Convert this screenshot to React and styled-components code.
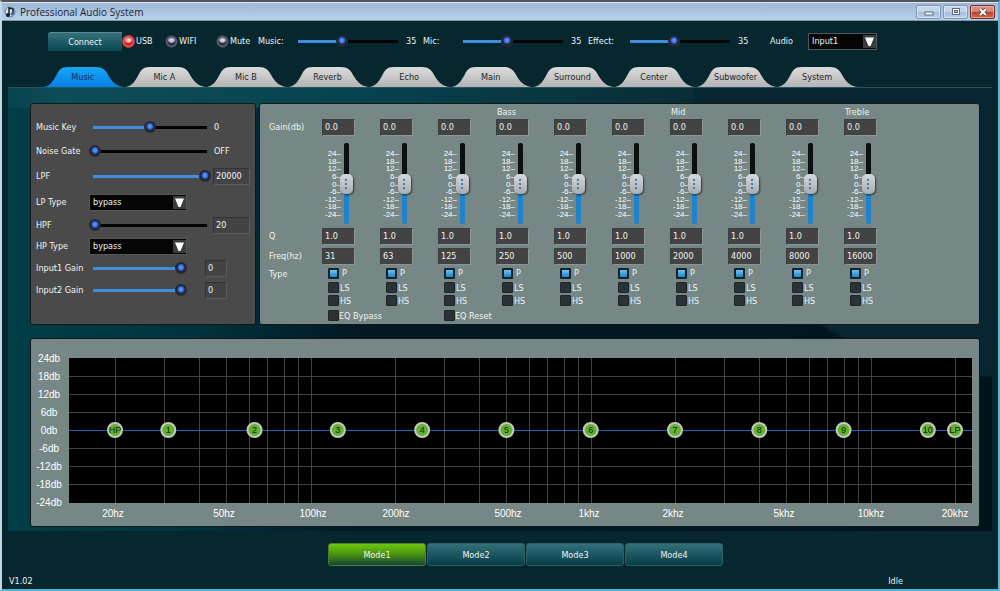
import React, { useState } from 'react';
import styled, { createGlobalStyle, css } from 'styled-components';

const ui = '"DejaVu Sans Condensed", "DejaVu Sans", sans-serif';
const plain = '"Liberation Sans", Arial, sans-serif';

const GlobalStyle = createGlobalStyle`
  * {
    box-sizing: border-box;
  }
  body {
    margin: 0;
    background: #07272f;
    color: #eef3f3;
    font: 9px/12px ${ui};
  }
  button, input, select {
    margin: 0;
    font: inherit;
    color: inherit;
  }
  fieldset {
    margin: 0;
    padding: 0;
    border: 0;
    min-width: 0;
  }
`;

const Window = styled.div`
  display: flex;
  flex-direction: column;
  min-height: 100vh;
  border: 2px solid;
  border-color: #505358 #5fb4d0 #4cb8d8 #c3d6e2;
  background: #07272f;
`;

const TitleBar = styled.header`
  display: flex;
  align-items: center;
  height: 19px;
  padding: 0 3px 0 2px;
  background: linear-gradient(#9db7d6, #b9d0ec);
  border-top: 1px solid #dce8f4;
  border-bottom: 1px solid #7c97a9;
  color: #1c2530;
`;

const Title = styled.h1`
  flex: 1;
  margin: 0 0 0 4px;
  font: 10px/16px "Open Sans", "Noto Sans", sans-serif;
`;

const WindowButton = styled.button`
  display: grid;
  place-items: center;
  width: 25px;
  height: 14px;
  margin-left: 2px;
  padding: 0;
  border: 1px solid ${p => (p.$close ? '#6e2b2b' : '#7f96b4')};
  border-radius: 2px;
  background: ${p => (p.$close
    ? 'linear-gradient(#d98a7c 45%, #bd3f2a 50%, #d0694f)'
    : 'linear-gradient(#c3d5ea 45%, #a6bedb 50%, #b9cfe8)')};
  box-shadow: inset 0 0 0 1px rgba(255, 255, 255, 0.4);
`;

const TopBar = styled.div`
  display: flex;
  align-items: center;
  height: 40px;
  padding-left: 46px;
`;

const ConnectButton = styled.button`
  width: 74px;
  height: 19px;
  border: 0;
  border-top: 1px solid #5a8c94;
  border-radius: 3px 0 0 0;
  background: linear-gradient(#35717a, #0b4750);
`;

const Radio = styled.label`
  display: flex;
  align-items: center;
  width: ${p => p.$width}px;
  gap: 1px;
  input {
    appearance: none;
    width: 13px;
    height: 13px;
    border-radius: 50%;
    background:
      radial-gradient(ellipse 4px 3px at 50% 40%, #dcdde8 0 25%, #8f90a8 80%, transparent),
      radial-gradient(circle, #2a2c3a 3px, #5d6070 5px, #0b1118 7px);
  }
  input:checked {
    background:
      radial-gradient(ellipse 4px 3px at 50% 40%, #ffdcdc 0 25%, #ff7a7a 80%, transparent),
      radial-gradient(circle, #c81e28 3px, #e0525a 5px, #8e2a30 7px);
  }
`;

const TopLabel = styled.label`
  width: ${p => p.$width}px;
`;

const TopValue = styled.output`
  width: ${p => p.$width}px;
  margin-left: 4px;
`;

const blueTrack = css`
  height: 3px;
  border-radius: 2px;
  background: linear-gradient(90deg, #3f8ddc ${p => p.$fill}%, #020405 ${p => p.$fill}%) center / calc(100% - 8px) 100% no-repeat;
`;

const Slider = styled.input`
  appearance: none;
  flex: none;
  width: ${p => p.$width}px;
  height: 12px;
  background: transparent;
  &::-webkit-slider-runnable-track {
    ${blueTrack}
  }
  &::-webkit-slider-thumb {
    appearance: none;
    width: 12px;
    height: 12px;
    margin-top: -5px;
    border-radius: 50%;
    background: radial-gradient(circle at 50% 45%, #5b95f2 0 1px, #2559c4 3px, #222433 4px, #2b2935 6px);
  }
`;

const SelectBox = styled.span`
  display: inline-grid;
  align-items: center;
  width: ${p => p.$width}px;
  height: 17px;
  border: 1px solid #50585a;
  background: #050505;
  > * {
    grid-area: 1 / 1;
  }
  select {
    appearance: none;
    width: 100%;
    height: 15px;
    padding: 0 0 0 3px;
    border: 0;
    background: transparent;
    line-height: 15px;
  }
  svg {
    justify-self: end;
    pointer-events: none;
  }
`;

const Tabs = styled.nav`
  display: flex;
  max-width: 816px;
  margin: 6px 0 0 40px;
`;

const Tab = styled.button`
  display: grid;
  flex: 1;
  height: 20px;
  padding: 0;
  border: 0;
  background: none;
  color: ${p => (p.$active ? '#0b2f63' : '#272727')};
  line-height: 20px;
  text-align: center;
  > * {
    grid-area: 1 / 1;
  }
  svg {
    width: 100%;
    height: 20px;
  }
`;

const Main = styled.main`
  display: flex;
  flex-direction: column;
  gap: 13px;
  margin: 0 6px;
  padding: 15px 12px 4px 22px;
  border-top: 1px solid #24545c;
  background:
    radial-gradient(ellipse 300px 290px at 100% 0, #07262f 99%, transparent),
    linear-gradient(90deg, #06444f, #0d4d58 5%, #06434f 35%, #0a2c34 70%) 0 0 / 100% 20px no-repeat,
    linear-gradient(90deg, #003f48, #00323c 20%, #021a24 35%, #01141c);
`;

const Row = styled.div`
  display: flex;
  gap: 3px;
`;

const SidePanel = styled.section`
  flex: 0 0 226px;
  padding: 11px 4px 0 5px;
  border: 1px solid #10181a;
  border-radius: 3px;
  background: #4a4a4a;
`;

const Setting = styled.div`
  display: flex;
  align-items: center;
  height: ${p => p.$height}px;
  > label {
    flex: 0 0 53px;
    white-space: nowrap;
  }
`;

const Box = styled.input`
  width: ${p => p.$width}px;
  height: 17px;
  margin-left: ${p => p.$gap || 0}px;
  padding: 0 0 1px 2px;
  border: 1px solid;
  border-color: #333 #5c5c5c #5c5c5c #333;
  background: #434343;
  line-height: 14px;
`;

const Reading = styled.output`
  margin-left: 3px;
`;

const EqPanel = styled.section`
  flex: 1;
  min-width: 0;
  height: 222px;
  padding: 2px 9px 0;
  border: 1px solid #10181a;
  border-radius: 3px;
  background: #768785;
`;

const Bands = styled.div`
  display: grid;
  grid-template-columns: 53px repeat(10, minmax(0, 58px));
`;

const Names = styled.div`
  display: flex;
  flex-direction: column;
  padding-top: 11px;
  line-height: 20px;
  span:nth-child(2) {
    margin-top: 89px;
  }
  span:nth-child(4) {
    line-height: 16px;
  }
`;

const Band = styled.fieldset`
  display: flex;
  flex-direction: column;
`;

const Region = styled.div`
  height: 13px;
  padding-left: 1px;
`;

const EqInput = styled(Box)`
  flex: none;
  width: 33px;
  margin: 0 0 ${p => p.$below || 0}px;
  border-color: #3a4040 #8a9795 #8a9795 #3a4040;
`;

const FaderRow = styled.div`
  display: flex;
  height: 81px;
  margin: 7px 0 4px;
`;

const Scale = styled.div`
  display: flex;
  flex-direction: column;
  justify-content: space-between;
  width: 19px;
  height: 68px;
  margin-top: 7px;
  color: #fff;
  font: 8px/7px ${plain};
  text-align: right;
`;

const Fader = styled.input`
  appearance: none;
  writing-mode: vertical-lr;
  direction: rtl;
  width: 14px;
  height: 81px;
  margin-left: -2px;
  background: transparent;
  &::-webkit-slider-runnable-track {
    width: 5px;
    border-radius: 2px;
    background: linear-gradient(#0c0f12 50%, #1d83cb 50%);
  }
  &::-webkit-slider-thumb {
    appearance: none;
    width: 13px;
    height: 20px;
    margin-left: -4px;
    border-radius: 5px;
    background:
      radial-gradient(circle, #3b83c0 1px, transparent 1px) 50% 50% / 4px 4px no-repeat,
      radial-gradient(circle, #3b83c0 1px, transparent 1px) 50% 25% / 4px 4px no-repeat,
      radial-gradient(circle, #3b83c0 1px, transparent 1px) 50% 75% / 4px 4px no-repeat,
      linear-gradient(#d8d9dc, #a9abb0);
    box-shadow: 1px 1px 2px rgba(0, 0, 0, 0.6);
  }
`;

const Tick = styled.label`
  display: flex;
  align-items: center;
  height: ${p => p.$height || 13}px;
  padding-left: 6px;
  gap: ${p => p.$gap || 0}px;
  white-space: nowrap;
  input {
    appearance: none;
    width: 11px;
    height: 11px;
    border: 1px solid #1e2629;
    border-radius: 1px;
    background: #2b3235;
  }
  input:checked {
    border: 2px solid #14222b;
    background: linear-gradient(#6cc4f0, #1c86c8);
  }
`;

const Switches = styled.div`
  display: grid;
  grid-template-columns: 116px 116px;
  padding: 2px 0 0 53px;
`;

const GraphPanel = styled.section`
  padding: 19px 7px 5px 5px;
  border: 1px solid #10181a;
  border-radius: 3px;
  background: #768785;
`;

const Graph = styled.svg`
  display: block;
  width: 100%;
  overflow: visible;
  text {
    font: 10px ${plain};
    fill: #fff;
    text-anchor: middle;
  }
  .node {
    font-size: 9px;
    fill: #0b2607;
  }
`;

const Modes = styled.div`
  display: flex;
  justify-content: center;
  gap: 1px;
  margin: 12px 0 0 51px;
`;

const ModeButton = styled.button`
  width: 98px;
  height: 23px;
  border: 1px solid ${p => (p.$active ? '#4b7f34' : '#2f5e66')};
  border-radius: 3px;
  background: ${p => (p.$active
    ? 'linear-gradient(#6cc60e, #48920f 50%, #17413a)'
    : 'linear-gradient(#33707a, #1c5761 50%, #063d48)')};
`;

const Footer = styled.footer`
  display: flex;
  justify-content: space-between;
  margin-top: auto;
  padding: 0 95px 2px 7px;
`;

const tabs = ['Music', 'Mic A', 'Mic B', 'Reverb', 'Echo', 'Main', 'Surround', 'Center', 'Subwoofer', 'System'];
const freqs = [31, 63, 125, 250, 500, 1000, 2000, 4000, 8000, 16000];
const regions = { 3: 'Bass', 6: 'Mid', 9: 'Treble' };
const levels = ['24', '18', '12', '6', '0', '-6', '-12', '-18', '-24'];

const Range = ({ min = 0, max = 100, value, ...rest }) => {
  const [current, setCurrent] = useState(value);
  const fill = ((current - min) / (max - min)) * 100;
  return (
    <Slider
      type="range"
      min={min}
      max={max}
      value={current}
      $fill={fill}
      onChange={e => setCurrent(Number(e.target.value))}
      {...rest}
    />
  );
};

const Select = ({ id, width, options }) => (
  <SelectBox $width={width}>
    <select id={id}>
      {options.map(o => <option key={o}>{o}</option>)}
    </select>
    <svg width="13" height="13" viewBox="0 0 13 13">
      <rect width="13" height="13" fill="#3a3d3e" />
      <path d="M2 2.5h9L7.5 11h-2z" fill="#fff" />
    </svg>
  </SelectBox>
);

const TopSlider = ({ id, label, value, width, valueWidth = 17 }) => (
  <>
    <TopLabel htmlFor={id} $width={width}>{label}</TopLabel>
    <Range id={id} value={value} max={80} $width={108} />
    <TopValue htmlFor={id} $width={valueWidth}>{value}</TopValue>
  </>
);

const settings = [
  { id: 'key', label: 'Music Key', height: 24, min: -5, max: 5, value: 0, width: 122, reading: '0' },
  { id: 'gate', label: 'Noise Gate', height: 24, value: 0, width: 122, reading: 'OFF' },
  { id: 'lpf', label: 'LPF', height: 26, value: 100, width: 122, box: '20000', boxWidth: 37, gap: 2 },
  { id: 'lptype', label: 'LP Type', height: 26, options: true },
  { id: 'hpf', label: 'HPF', height: 20, value: 0, width: 122, box: '20', boxWidth: 37, gap: 2 },
  { id: 'hptype', label: 'HP Type', height: 22, options: true },
  { id: 'in1', label: 'Input1 Gain', height: 22, value: 100, width: 98, box: '0', boxWidth: 22, gap: 18 },
  { id: 'in2', label: 'Input2 Gain', height: 22, value: 100, width: 98, box: '0', boxWidth: 22, gap: 18 },
];

const EqBand = ({ index, freq }) => {
  const [type, setType] = useState('P');
  return (
    <Band>
      <Region>{regions[index]}</Region>
      <EqInput aria-label={`Gain ${freq}`} defaultValue="0.0" />
      <FaderRow>
        <Scale>{levels.map(l => <span key={l}>{l}–</span>)}</Scale>
        <Fader type="range" min={-24} max={24} defaultValue={0} aria-label={`Level ${freq}`} />
      </FaderRow>
      <EqInput aria-label={`Q ${freq}`} defaultValue="1.0" $below={3} />
      <EqInput aria-label={`Frequency ${freq}`} defaultValue={freq} />
      {['P', 'LS', 'HS'].map(t => (
        <Tick key={t} $height={t === 'P' ? 16 : 13} $gap={t === 'P' ? 3 : 1}>
          <input type="radio" name={`type-${freq}`} checked={type === t} onChange={() => setType(t)} />
          {t}
        </Tick>
      ))}
    </Band>
  );
};

// One decade of the frequency axis is 280 units wide and 20hz sits at x = 79
const freqX = f => 79 + Math.log10(f / 20) * 280;
const gridFreqs = [];
[10, 100, 1000, 10000].forEach(decade => {
  for (let i = 1; i < 10; i += 1) {
    const f = decade * i;
    if (f >= 20 && f <= 20000) gridFreqs.push(f);
  }
});
const axisLabels = [
  ['20hz', 77], ['50hz', 188], ['100hz', 277], ['200hz', 360], ['500hz', 472],
  ['1khz', 553], ['2khz', 637], ['5khz', 748], ['10khz', 835], ['20khz', 919],
];
const nodes = [['HP', 20], ...freqs.map((f, i) => [String(i + 1), f]), ['LP', 20000]];

const Response = () => (
  <Graph viewBox="0 0 936 163" role="img" aria-label="Frequency response">
    <rect x="33" width="903" height="145" fill="#000" />
    {gridFreqs.map(f => (
      <path key={f} d={`M${Math.round(freqX(f)) + 0.5} 0V145`} stroke="#444" />
    ))}
    {levels.map((l, i) => (
      <React.Fragment key={l}>
        {i > 0 && i < 8 && i !== 4 && <path d={`M33 ${i * 18 + 0.5}H936`} stroke="#444" />}
        <text x="13" y={i * 18 + 4}>{l}db</text>
      </React.Fragment>
    ))}
    <path d="M33 72.5H936" stroke="#1467b4" />
    {axisLabels.map(([label, x]) => (
      <text key={label} x={x} y="159">{label}</text>
    ))}
    {nodes.map(([name, f]) => (
      <g key={name}>
        <circle cx={freqX(f)} cy="72" r="7" fill="#62b22f" stroke="#c3c9bf" strokeWidth="2" />
        <text className="node" x={freqX(f)} y="75">{name}</text>
      </g>
    ))}
  </Graph>
);

const App = () => {
  const [tab, setTab] = useState('Music');
  const [mode, setMode] = useState(1);

  return (
    <Window>
      <GlobalStyle />
      <TitleBar>
        <svg width="12" height="14" viewBox="0 0 12 14">
          <circle cx="6" cy="7" r="5" fill="#d7e2ee" stroke="#5e7690" />
          <path d="M5 10V3l4 1v5" fill="none" stroke="#14232f" strokeWidth="1.5" />
          <circle cx="4" cy="10" r="2" fill="#14232f" />
          <circle cx="8" cy="9" r="1.5" fill="#2f6b9a" />
        </svg>
        <Title>Professional Audio System</Title>
        <WindowButton aria-label="Minimize">
          <svg width="10" height="8"><rect x="1" y="4" width="8" height="3" fill="#fff" stroke="#5b6b80" /></svg>
        </WindowButton>
        <WindowButton aria-label="Maximize">
          <svg width="10" height="8">
            <rect x="1.5" y="0.5" width="7" height="6" fill="#fff" stroke="#5b6b80" />
            <rect x="3.5" y="2.5" width="3" height="2" fill="#a6bedb" stroke="#5b6b80" />
          </svg>
        </WindowButton>
        <WindowButton aria-label="Close" $close>
          <svg width="10" height="8">
            <path d="M2 1l6 6M8 1L2 7" stroke="#6b3434" strokeWidth="3.5" />
            <path d="M2 1l6 6M8 1L2 7" stroke="#fff" strokeWidth="2" />
          </svg>
        </WindowButton>
      </TitleBar>

      <TopBar>
        <ConnectButton>Connect</ConnectButton>
        <Radio $width={43}><input type="radio" name="link" defaultChecked />USB</Radio>
        <Radio $width={51}><input type="radio" name="link" />WIFI</Radio>
        <Radio $width={42}><input type="checkbox" />Mute</Radio>
        <TopSlider id="music" label="Music:" value={35} width={36} />
        <TopSlider id="mic" label="Mic:" value={35} width={36} />
        <TopSlider id="effect" label="Effect:" value={35} width={38} valueWidth={32} />
        <TopLabel htmlFor="audio" $width={38}>Audio</TopLabel>
        <Select id="audio" width={69} options={['Input1', 'Input2']} />
      </TopBar>

      <Tabs>
        {tabs.map((name, i) => (
          <Tab key={name} $active={tab === name} onClick={() => setTab(name)}>
            <svg viewBox="0 0 82 20" preserveAspectRatio="none">
              <defs>
                <linearGradient id={`tab-${i}`} x2="0" y2="1">
                  <stop stopColor={tab === name ? '#1aa7f5' : '#dcdcdc'} />
                  <stop offset="1" stopColor={tab === name ? '#067fe8' : '#b4b4b4'} />
                </linearGradient>
              </defs>
              <path
                d="M2 20C9 18 11 14 14 9C17 3 19 0 26 0H54C61 0 64 3 67 9C70 14 74 19 82 20Z"
                fill={`url(#tab-${i})`}
              />
            </svg>
            <span>{name}</span>
          </Tab>
        ))}
      </Tabs>

      <Main>
        <Row>
          <SidePanel>
            {settings.map(s => (
              <Setting key={s.id} $height={s.height}>
                <label htmlFor={s.id}>{s.label}</label>
                {s.options
                  ? <Select id={s.id} width={98} options={['bypass', 'butterworth', 'bessel']} />
                  : <Range id={s.id} min={s.min} max={s.max} value={s.value} $width={s.width} />}
                {s.reading && <Reading htmlFor={s.id}>{s.reading}</Reading>}
                {s.box && <Box aria-label={`${s.label} value`} defaultValue={s.box} $width={s.boxWidth} $gap={s.gap} />}
              </Setting>
            ))}
          </SidePanel>

          <EqPanel>
            <Bands>
              <Names>
                <span>Gain(db)</span>
                <span>Q</span>
                <span>Freq(hz)</span>
                <span>Type</span>
              </Names>
              {freqs.map((f, i) => <EqBand key={f} index={i} freq={f} />)}
            </Bands>
            <Switches>
              <Tick><input type="checkbox" />EQ Bypass</Tick>
              <Tick><input type="checkbox" />EQ Reset</Tick>
            </Switches>
          </EqPanel>
        </Row>

        <GraphPanel>
          <Response />
        </GraphPanel>
      </Main>

      <Modes>
        {[1, 2, 3, 4].map(n => (
          <ModeButton key={n} $active={mode === n} onClick={() => setMode(n)}>Mode{n}</ModeButton>
        ))}
      </Modes>

      <Footer>
        <span>V1.02</span>
        <span>Idle</span>
      </Footer>
    </Window>
  );
};

export default App;
